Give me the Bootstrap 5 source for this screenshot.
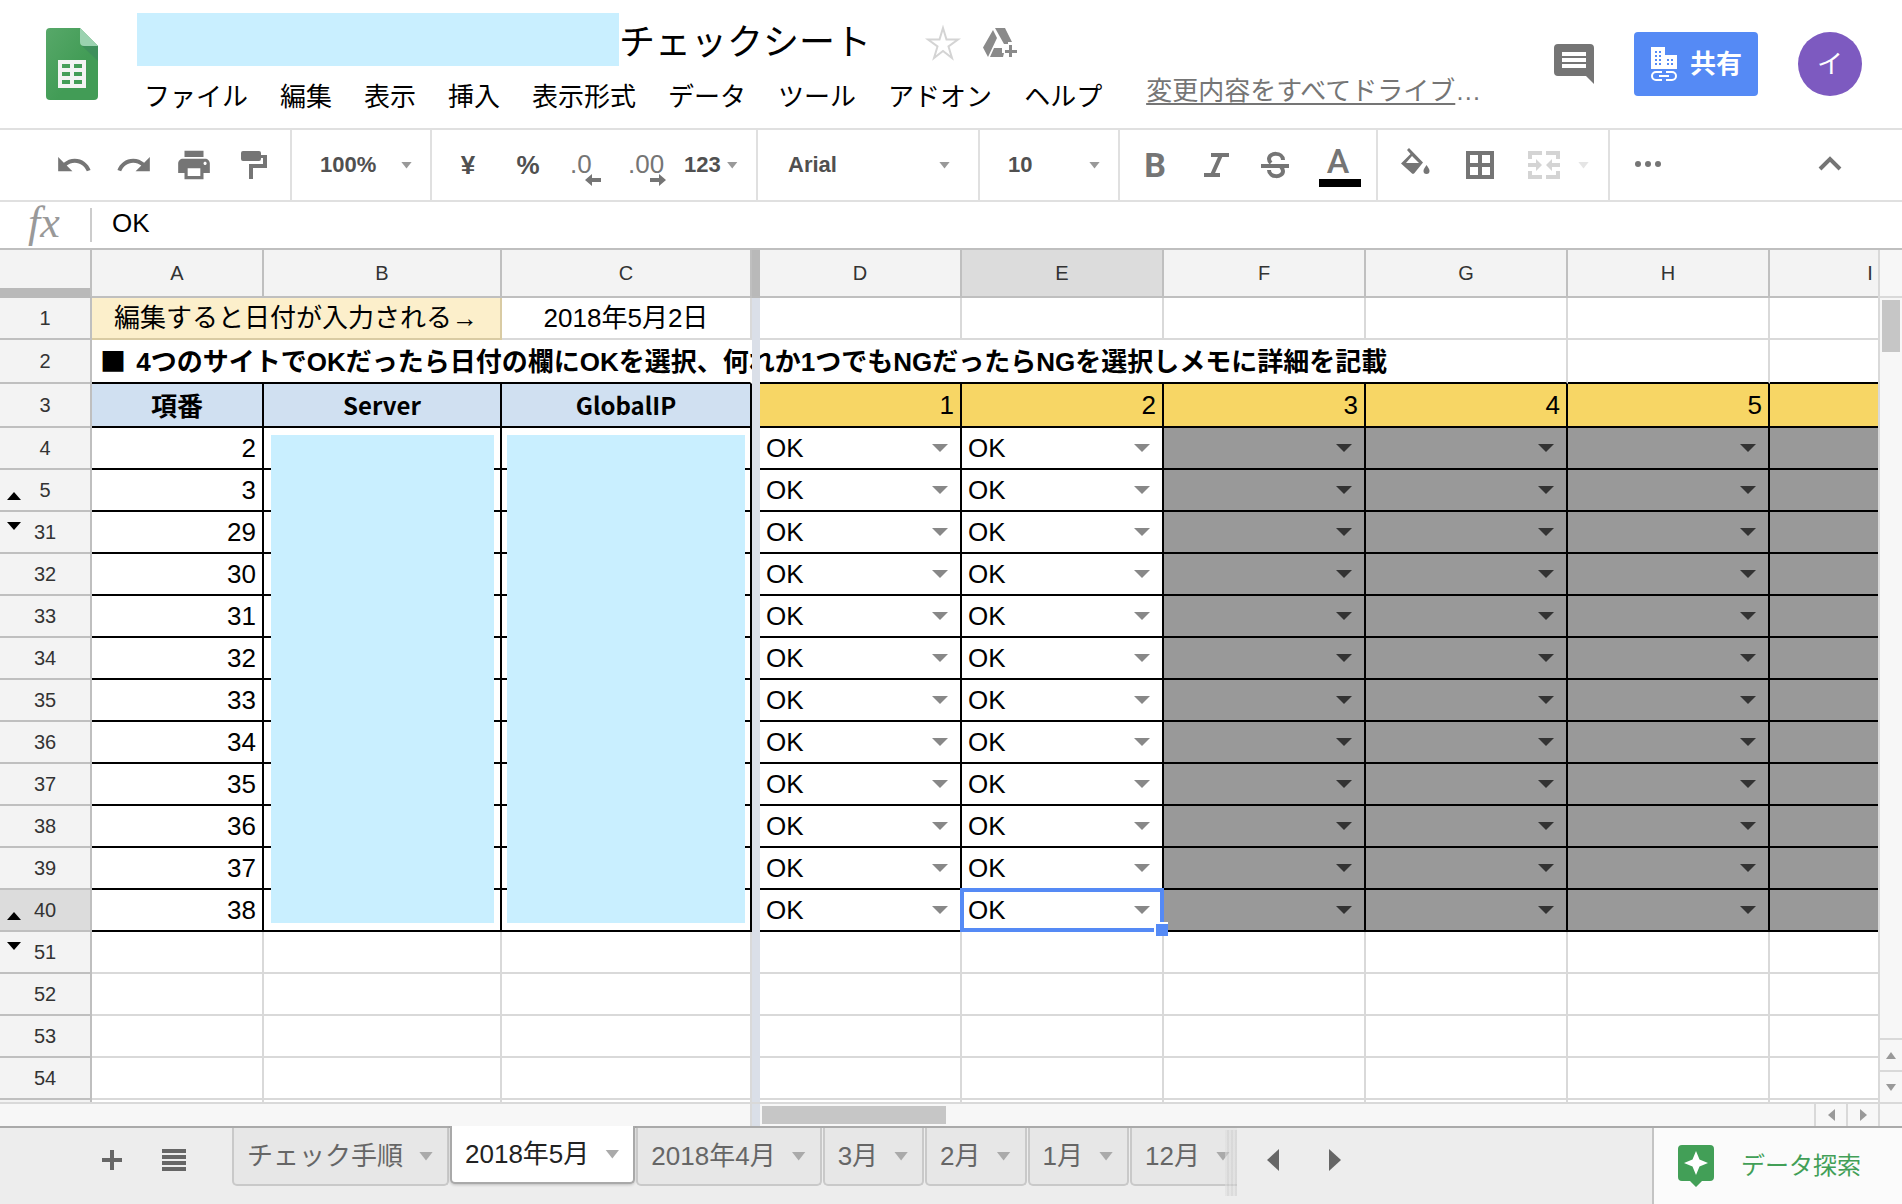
<!DOCTYPE html>
<html lang="ja">
<head>
<meta charset="utf-8">
<meta name="viewport" content="width=device-width, initial-scale=1">
<title>チェックシート</title>
<link rel="stylesheet" href="https://cdn.jsdelivr.net/npm/bootstrap@5.3.0/dist/css/bootstrap.min.css">
<style>
  :root { --line: #d9d9d9; --head-line: #bfbfbf; --icon: #757575; --hidden: #c9efff; --accent: #558af5; }
  body { font-family: "Liberation Sans", "Noto Sans CJK JP", sans-serif; font-size: 26px; line-height: 36px; color: #000; background: #fff; }
  button, input, select { font: inherit; color: inherit; }
  button, select { background: none; border: 0; padding: 0; appearance: none; }
  svg { display: block; flex: none; overflow: visible; }
  input:focus, select:focus { outline: 0; }

  /* title bar */
  .app-head { height: 130px; border-bottom: 2px solid #e0e0e0; }
  .logo-link { margin: 28px 39px 0 46px; }
  .doc-title { height: 53px; margin-top: 13px; font-size: 36px; }
  .doc-title > :not(.title-mask) { padding-top: 6px; }
  .title-mask { width: 482px; background: var(--hidden); }
  .menu-row { gap: 32px; padding: 13px 0 0 7px; }
  .menu-row button { white-space: nowrap; }
  .save-note { color: var(--icon); margin: 73px 0 0 44px; white-space: nowrap; }
  .save-note a { color: inherit; text-underline-offset: 3px; text-decoration-thickness: 2px; }
  .head-right { gap: 40px; padding: 32px 40px 0 0; }
  .share-btn { width: 124px; height: 64px; background: var(--accent); color: #fff; border-radius: 4px; font-weight: 700; gap: 12px; }
  .user-dot { width: 64px; height: 64px; background: #7d5ac0; color: #fff; }

  /* toolbar */
  .tool-row { height: 72px; border-bottom: 2px solid #e0e0e0; color: var(--icon); }
  .tool-group { border-right: 2px solid #e0e0e0; padding: 0 6px; }
  .group-edit { width: 292px; padding-left: 44px; }
  .group-small { width: 140px; padding: 0 18px 0 28px; }
  .group-font { width: 222px; padding: 0 28px 0 30px; }
  .group-style { width: 258px; padding-left: 7px; }
  .group-cell { width: 232px; padding-left: 8px; }
  .tool-btn { width: 60px; height: 60px; display: flex; align-items: center; justify-content: center; }
  .tool-group b, .tool-group select { color: #505050; font-weight: 700; }
  .tool-text { font-size: 22px; }
  .num-btn { width: 72px; padding-left: 6px; gap: 6px; }
  .tool-group select { min-width: 0; flex: 1; }
  .fold-bar { margin-right: 42px; }
  .tri { width: 11px; height: 7px; background: #999; clip-path: polygon(0 0, 100% 0, 50% 100%); flex: none; }
  .tool-group svg text { fill: currentColor; }

  /* formula bar */
  .formula-row { height: 48px; border-bottom: 2px solid var(--head-line); }
  .fx-mark { width: 92px; height: 34px; margin-top: 6px; border-right: 2px solid #ccc; color: #999; font: italic 44px/30px "Liberation Serif", serif; padding-left: 28px; }
  .formula-row input { border: 0; padding: 0 20px; height: 42px; }

  /* grid */
  .grid-area { min-height: 0; }
  .sheet { table-layout: fixed; width: 1972px; border-collapse: separate; border-spacing: 0; }
  .sheet th, .sheet td { height: 42px; padding: 0 6px; border: solid var(--line); border-width: 0 2px 2px 0; line-height: 36px; white-space: nowrap; }
  .sheet th { background: #f3f3f3; border-color: var(--head-line); font-size: 20px; font-weight: 400; color: #333; text-align: center; padding: 0; }
  .sheet thead th { height: 48px; }
  .sheet tr.tall > * { height: 44px; }
  .sheet th.on { background: #dcdcdc; }
  .sheet .corner { background: linear-gradient(#f3f3f3 38px, #b9b9b9 38px); border-bottom-color: #b9b9b9; }
  .sheet .split { position: relative; z-index: 1; padding: 0; border-right: 0; background: #dadfe8; border-color: #dadfe8; }
  .sheet th.split { background: #b9b9b9; border-color: #b9b9b9; }
  .sheet .notice { background: #fcefcb; border-color: #d9cba3; }
  .sheet .guide { border-bottom-color: #000; border-right-color: transparent; overflow: visible; font-weight: 700; padding-left: 8px; }
  .square { font-family: "Noto Sans CJK JP", sans-serif; margin-right: 3px; }
  .sheet .ruled { border-color: #000; }
  .sheet .rule-b { border-bottom-color: #000; }
  .sheet .label-cell { background: #d0e0f1; font-family: "Noto Sans CJK JP", sans-serif; font-weight: 700; }
  .sheet .label-latin { font-size: 24px; }
  .sheet .day { background: #f7d665; }
  .sheet .future { background: #999; }
  .pick { display: flex; align-items: center; padding-right: 6px; }
  .pick select { flex: 1; min-width: 0; height: 38px; }
  .pick .tri { width: 16px; height: 8px; background: #888; }
  .future .tri { background: #333; }
  .mask { position: absolute; inset: 7px 6px auto 7px; height: 488px; background: var(--hidden); z-index: 1; }
  .mask.wide { inset: 7px 5px auto 5px; }
  .cursor { position: absolute; inset: -2px; border: 4px solid var(--accent); pointer-events: none; z-index: 2; }
  .cursor::after { content: ""; position: absolute; right: -8px; bottom: -8px; width: 14px; height: 14px; background: var(--accent); border: solid #fff; border-width: 2px 0 0 2px; }
  .fold { position: absolute; left: 7px; width: 14px; height: 8px; background: #000; }
  .fold.up { bottom: 10px; clip-path: polygon(50% 0, 100% 100%, 0 100%); }
  .fold.down { top: 10px; clip-path: polygon(0 0, 100% 0, 50% 100%); }

  /* scroll bars */
  .v-bar { width: 24px; border-left: 2px solid var(--line); background: #f7f7f7; }
  .v-cap { height: 48px; border-bottom: 2px solid var(--line); }
  .v-thumb { height: 52px; margin: 2px; background: #c6c6c6; }
  .v-bar button { height: 32px; border-top: 2px solid var(--line); }
  .h-bar { height: 24px; border-top: 2px solid var(--line); background: #f7f7f7; }
  .h-fixed { width: 752px; border-right: 2px solid var(--line); }
  .h-split { width: 8px; background: #dadfe8; }
  .h-thumb { width: 184px; height: 18px; margin: 2px; background: #c6c6c6; }
  .h-bar button { width: 32px; border-left: 2px solid var(--line); }
  .h-end { width: 24px; border-left: 2px solid var(--line); }
  .v-bar svg, .h-bar svg { fill: #999; margin: auto; }

  /* sheet tabs */
  .foot { height: 78px; border-top: 2px solid #aaa; background: #ededed; }
  .foot-tools { width: 232px; padding: 4px 0 0 102px; gap: 40px; }
  .tab-strip { width: 1005px; overflow: hidden; margin-top: -2px; }
  .sheet-tab { display: flex; align-items: center; gap: 16px; height: 58px; margin-top: 2px; padding: 0 14px 0 13px; border: solid #c9c9c9; border-width: 0 2px 2px; border-radius: 0 0 5px 5px; background: #e7e7e7; color: #666; white-space: nowrap; flex: none; }
  .sheet-tab + .sheet-tab { margin-left: 1px; }
  .sheet-tab .tri { width: 14px; height: 9px; background: #aaa; }
  .sheet-tab.current { margin-top: 0; background: #fff; color: #222; border-color: #a9a9a9; box-shadow: 0 1px 3px #0003; }
  .tab-fade { position: absolute; right: 0; top: 2px; width: 12px; height: 66px; background: repeating-linear-gradient(90deg, #ddd8 0 2px, #ccc8 2px 4px); }
  .tab-nav { gap: 50px; padding-left: 30px; padding-bottom: 12px; }
  .explore { width: 250px; border-left: 2px solid #c4c4c4; background: #fbfbfb; color: #429f57; font-size: 24px; padding-left: 24px; gap: 27px; }
</style>
</head>
<body class="vh-100 d-flex flex-column overflow-hidden">

<header class="app-head d-flex flex-shrink-0">
  <a class="logo-link" href="#" aria-label="ホーム">
    <svg width="52" height="72" viewBox="0 0 52 72">
      <defs><linearGradient id="lg" x1="0" y1="0" x2="1" y2="1"><stop offset="0" stop-color="#57a869"/><stop offset=".6" stop-color="#429c56"/></linearGradient></defs>
      <path fill="url(#lg)" d="M4 0h30l18 18v50a4 4 0 0 1-4 4H4a4 4 0 0 1-4-4V4a4 4 0 0 1 4-4z"/>
      <path fill="#3d8a5e" opacity=".7" d="M35 17l17 16V18z"/>
      <path fill="#9bd2b0" d="M34 0l18 18H38a4 4 0 0 1-4-4z"/>
      <path fill="#f3f3f3" fill-rule="evenodd" d="M12 32h28v28H12zM16 36v4h8v-4zM28 36v4h8v-4zM16 44v4h8v-4zM28 44v4h8v-4zM16 52v4h8v-4zM28 52v4h8v-4z"/>
    </svg>
  </a>
  <div>
    <div class="doc-title d-flex align-items-center">
      <div class="title-mask h-100"></div>
      <span>チェックシート</span>
      <button class="ms-5 ps-2" aria-label="スターを付ける"><svg width="32" height="34" viewBox="0 0 32 34"><path fill="none" stroke="#d4d4d4" stroke-width="2" d="M16 2l3.500 11.500H31l-9.500 7L25 32l-9-7-9 7 3.500-11.500-9.500-7h11.500z"/></svg></button>
      <button class="ms-4" aria-label="ドライブに追加"><svg width="34" height="30" viewBox="0 0 34 30" fill="#8a8a8a"><path d="M10 2l4 8L5 29 0 19.500zM12 0h10l7 14h-4v2h-4zM11 20h8v5h2l-1 4H7z"/><path d="M26 17h3v5h5v3h-5v4h-3v-4h-4v-3h4z"/></svg></button>
    </div>
    <nav class="menu-row d-flex">
      <button>ファイル</button><button>編集</button><button>表示</button><button>挿入</button><button>表示形式</button><button>データ</button><button>ツール</button><button>アドオン</button><button>ヘルプ</button>
    </nav>
  </div>
  <div class="save-note"><a href="#">変更内容をすべてドライブ</a>…</div>
  <div class="head-right d-flex ms-auto align-items-start">
    <button class="mt-2 pt-1" aria-label="コメント"><svg width="40" height="40" viewBox="0 0 40 40"><path fill="#757575" fill-rule="evenodd" d="M4 0h32a4 4 0 0 1 4 4v36l-8-8H4a4 4 0 0 1-4-4V4a4 4 0 0 1 4-4zM8 8v4h24V8zM8 14v4h24v-4zM8 20v4h24v-4z"/></svg></button>
    <button class="share-btn d-flex align-items-center justify-content-center">
      <svg width="28" height="34" viewBox="0 0 28 34"><path fill="#fff" fill-rule="evenodd" d="M1 0h14v8h12v14H1zM5 4v2h2V4zM9 4v2h2V4zM5 8v2h2V8zM9 8v2h2V8zM5 12v2h2v-2zM9 12v2h2v-2zM5 16v2h2v-2zM9 16v2h2v-2zM17 12v2h2v-2zM21 12v2h2v-2zM17 16v2h2v-2zM21 16v2h2v-2z"/><path fill="none" stroke="#fff" stroke-width="2" d="M12 25H6a4 4 0 0 0 0 8h6M16 25h6a4 4 0 0 1 0 8h-6M9 29h10"/></svg>
      共有</button>
    <button class="user-dot rounded-circle">イ</button>
  </div>
</header>

<div class="tool-row d-flex flex-shrink-0" role="toolbar">
  <div class="tool-group group-edit d-flex align-items-center">
    <button class="tool-btn" aria-label="元に戻す"><svg width="38" height="38" viewBox="0 0 24 24" fill="currentColor"><path d="M12.500 8c-2.650 0-5.050.99-6.900 2.600L2 7v9h9l-3.620-3.620c1.390-1.160 3.160-1.880 5.120-1.880 3.540 0 6.550 2.310 7.600 5.500l2.370-.78C21.080 11.030 17.150 8 12.500 8z"/></svg></button>
    <button class="tool-btn" aria-label="やり直し"><svg width="38" height="38" viewBox="0 0 24 24" fill="currentColor"><path d="M18.400 10.600C16.550 8.990 14.150 8 11.500 8c-4.650 0-8.580 3.030-9.960 7.220L3.900 16c1.050-3.190 4.050-5.500 7.600-5.500 1.950 0 3.730.72 5.120 1.880L13 16h9V7l-3.600 3.600z"/></svg></button>
    <button class="tool-btn" aria-label="印刷"><svg width="38" height="38" viewBox="0 0 24 24" fill="currentColor"><path d="M19 8H5c-1.660 0-3 1.340-3 3v6h4v4h12v-4h4v-6c0-1.660-1.340-3-3-3zm-3 11H8v-5h8v5zm3-7c-.55 0-1-.45-1-1s.45-1 1-1 1 .45 1 1-.45 1-1 1zm-1-9H6v4h12V3z"/></svg></button>
    <button class="tool-btn" aria-label="書式を貼り付け"><svg width="26" height="28" viewBox="0 0 26 28" fill="currentColor"><path d="M2 0h16a2 2 0 0 1 2 2v2h6v13H12v11H8V13h14V7h-2v1a2 2 0 0 1-2 2H2a2 2 0 0 1-2-2V2a2 2 0 0 1 2-2z"/></svg></button>
  </div>
  <div class="tool-group group-small d-flex align-items-center tool-text">
    <select aria-label="ズーム"><option>100%</option></select><span class="tri"></span>
  </div>
  <div class="tool-group d-flex align-items-center">
    <button class="tool-btn"><b>¥</b></button>
    <button class="tool-btn"><b>%</b></button>
    <button class="tool-btn" aria-label="小数点以下の桁数を減らす"><svg width="42" height="36" viewBox="0 0 42 36" fill="currentColor"><text x="3" y="26" font-size="26">.0</text><path d="M18 33l7-6v4h9v4h-9v4z"/></svg></button>
    <button class="tool-btn" aria-label="小数点以下の桁数を増やす"><svg width="42" height="36" viewBox="0 0 42 36" fill="currentColor"><text x="1" y="26" font-size="26">.00</text><path d="M39 33l-7-6v4h-9v4h9v4z"/></svg></button>
    <button class="tool-text num-btn d-flex align-items-center"><b>123</b><span class="tri"></span></button>
  </div>
  <div class="tool-group group-font d-flex align-items-center tool-text">
    <select aria-label="フォント"><option>Arial</option></select><span class="tri"></span>
  </div>
  <div class="tool-group group-small d-flex align-items-center tool-text">
    <select aria-label="フォント サイズ"><option>10</option></select><span class="tri"></span>
  </div>
  <div class="tool-group group-style d-flex align-items-center">
    <button class="tool-btn" aria-label="太字"><svg width="42" height="42" viewBox="0 0 42 42"><text x="19" y="33" text-anchor="middle" font-family="Roboto" font-weight="700" font-size="34">B</text></svg></button>
    <button class="tool-btn" aria-label="斜体"><svg width="42" height="42" viewBox="0 0 42 42"><path fill="none" stroke="currentColor" stroke-width="4" d="M15 11h18M8 31h16M25 11l-9 20"/></svg></button>
    <button class="tool-btn" aria-label="取り消し線"><svg width="42" height="42" viewBox="0 0 42 42" fill="none" stroke="currentColor" stroke-width="4"><path d="M28 16c0-8-14-8-14-1 0 2 1 3 2 4M14 26c0 8 14 8 14 1 0-2-1-3-2-4M6 22h28"/></svg></button>
    <button class="tool-btn ms-1" aria-label="テキストの色"><svg width="42" height="42" viewBox="0 0 42 42"><text x="19" y="29" text-anchor="middle" font-family="Roboto" font-weight="500" font-size="34">A</text><path fill="#000" d="M0 35h42v8H0z"/></svg></button>
  </div>
  <div class="tool-group group-cell d-flex align-items-center">
    <button class="tool-btn pb-2" aria-label="塗りつぶし"><svg width="30" height="27" viewBox="0 0 30 27" fill="currentColor"><path fill-rule="evenodd" d="M6 2l2-2 14 14.500-8.500 10.500a2 2 0 0 1-3 0L0 15.500 9.500 6zM11 8L5 15h13z"/><path d="M25.500 17c2 3 3 4.500 3 6a3 3 0 0 1-6 0c0-1.500 1-3 3-6z"/></svg></button>
    <button class="tool-btn ms-1" aria-label="枠線"><svg width="28" height="28" viewBox="0 0 28 28"><path fill="none" stroke="currentColor" stroke-width="4" d="M2 2h24v24H2zM14 2v24M2 14h24"/></svg></button>
    <button class="tool-btn ms-1" aria-label="セルを結合"><svg width="32" height="28" viewBox="0 0 32 28" fill="#d4d4d4"><path d="M0 0h14v4H4v4H0zM18 0h14v8h-4V4H18zM0 20h4v4h10v4H0zM28 20h4v8H18v-4h10zM0 12h8V8l6 6-6 6v-4H0zM32 12h-8V8l-6 6 6 6v-4h8z"/></svg></button>
    <span class="tri ms-1 opacity-25"></span>
  </div>
  <button class="tool-btn mt-1 ms-2" aria-label="その他"><svg width="26" height="8" viewBox="0 0 26 8" fill="currentColor"><circle cx="3" cy="4" r="3"/><circle cx="13" cy="4" r="3"/><circle cx="23" cy="4" r="3"/></svg></button>
  <button class="tool-btn fold-bar ms-auto mt-1" aria-label="メニューを非表示"><svg width="24" height="16" viewBox="0 0 24 16"><path fill="none" stroke="currentColor" stroke-width="4" d="M2 13L12 3l10 10"/></svg></button>
</div>

<div class="formula-row d-flex flex-shrink-0">
  <label class="fx-mark" for="fx">fx</label>
  <input id="fx" class="flex-grow-1" value="OK">
</div>

<main class="grid-area d-flex flex-grow-1 overflow-hidden">
  <div class="flex-grow-1 overflow-hidden">
    <table class="sheet">
      <colgroup><col width="92"><col width="172"><col width="238"><col width="250"><col width="8"><col width="202"><col width="202"><col width="202"><col width="202"><col width="202"><col width="202"></colgroup>
      <thead><tr><th class="corner"></th><th>A</th><th>B</th><th>C</th><th class="split"></th><th>D</th><th class="on">E</th><th>F</th><th>G</th><th>H</th><th>I</th></tr></thead>
      <tbody id="rows">
        <tr><th>1</th><td class="notice text-center" colspan="2">編集すると日付が入力される→</td><td class="text-center">2018年5月2日</td><td class="split"></td><td></td><td></td><td></td><td></td><td></td><td></td></tr>
        <tr class="tall"><th>2</th><td class="guide" colspan="3"><span class="square">■</span> 4つのサイトでOKだったら日付の欄にOKを選択、何れか1つでもNGだったらNGを選択しメモに詳細を記載</td><td class="split"></td><td class="rule-b" colspan="4"></td><td class="rule-b"></td><td class="rule-b"></td></tr>
        <tr class="tall"><th>3</th><td class="ruled label-cell text-center">項番</td><td class="ruled label-cell label-latin text-center">Server</td><td class="ruled label-cell label-latin text-center">GlobalIP</td><td class="split"></td><td class="ruled day text-end">1</td><td class="ruled day text-end">2</td><td class="ruled day text-end">3</td><td class="ruled day text-end">4</td><td class="ruled day text-end">5</td><td class="ruled day"></td></tr>
      </tbody>
    </table>
  </div>
  <div class="v-bar d-flex flex-column flex-shrink-0">
    <div class="v-cap"></div>
    <div class="v-thumb"></div>
    <button class="mt-auto" aria-label="上へ"><svg width="10" height="7"><path d="M5 0l5 7H0z"/></svg></button>
    <button aria-label="下へ"><svg width="10" height="7"><path d="M0 0h10L5 7z"/></svg></button>
  </div>
</main>

<div class="h-bar d-flex flex-shrink-0">
  <div class="h-fixed"></div><div class="h-split"></div>
  <div class="h-thumb"></div>
  <button class="ms-auto" aria-label="左へ"><svg width="7" height="12"><path d="M7 0v12L0 6z"/></svg></button>
  <button aria-label="右へ"><svg width="7" height="12"><path d="M0 0v12l7-6z"/></svg></button>
  <div class="h-end"></div>
</div>

<footer class="foot d-flex flex-shrink-0">
  <div class="foot-tools d-flex align-items-center pb-3">
    <button aria-label="シートを追加"><svg width="20" height="20"><path fill="#666" d="M8 0h4v8h8v4h-8v8H8v-8H0V8h8z"/></svg></button>
    <button aria-label="すべてのシート"><svg width="24" height="24"><path fill="#666" d="M0 1h24v4H0zM0 7h24v4H0zM0 13h24v4H0zM0 19h24v4H0z"/></svg></button>
  </div>
  <div class="position-relative">
    <div class="tab-strip d-flex align-items-start pb-2">
      <button class="sheet-tab">チェック手順<span class="tri"></span></button>
      <button class="sheet-tab current">2018年5月<span class="tri"></span></button>
      <button class="sheet-tab">2018年4月<span class="tri"></span></button>
      <button class="sheet-tab">3月<span class="tri"></span></button>
      <button class="sheet-tab">2月<span class="tri"></span></button>
      <button class="sheet-tab">1月<span class="tri"></span></button>
      <button class="sheet-tab">12月<span class="tri"></span></button>
    </div>
    <div class="tab-fade"></div>
  </div>
  <div class="tab-nav d-flex align-items-center">
    <button aria-label="前のシート"><svg width="12" height="22"><path fill="#666" d="M12 0v22L0 11z"/></svg></button>
    <button aria-label="次のシート"><svg width="12" height="22"><path fill="#666" d="M0 0v22l12-11z"/></svg></button>
  </div>
  <button class="explore d-flex align-items-center ms-auto">
    <svg width="36" height="42" viewBox="0 0 36 42"><path fill="#429f57" d="M4 0h28a4 4 0 0 1 4 4v28a4 4 0 0 1-4 4h-8l-6 6-6-6H4a4 4 0 0 1-4-4V4a4 4 0 0 1 4-4z"/><path fill="#fff" d="M18 6l3.500 8.500L30 18l-8.500 3.500L18 30l-3.500-8.500L6 18l8.500-3.500z"/></svg>
    <span>データ探索</span></button>
</footer>

<script>
  // [row number, item number, fold marker]
  const data = [[4, 2], [5, 3, 'up'], [31, 29, 'down'], [32, 30], [33, 31], [34, 32], [35, 33], [36, 34], [37, 35], [38, 36], [39, 37], [40, 38, 'up']];
  const pick = (col, row, value) => `<div class="pick"><select aria-label="${col}${row}"><option>${value}</option></select><span class="tri"></span></div>`;
  const fold = f => f ? `<span class="fold ${f}"></span>` : '';
  let html = '';
  data.forEach(([row, item, mark], i) => {
    const mask = c => i === 0 ? `<div class="mask ${c}"></div>` : '';
    html += `<tr><th class="position-relative ${row === 40 ? 'on' : ''}">${fold(mark)}${row}</th>
      <td class="ruled text-end">${item}</td><td class="ruled position-relative">${mask('')}</td><td class="ruled position-relative">${mask('wide')}</td><td class="split"></td>`;
    html += `<td class="ruled">${pick('D', row, 'OK')}</td>`;
    html += `<td class="ruled position-relative">${pick('E', row, 'OK')}${row === 40 ? '<div class="cursor"></div>' : ''}</td>`;
    for (const c of 'FGHI') html += `<td class="ruled future">${pick(c, row, '')}</td>`;
    html += '</tr>';
  });
  [51, 52, 53, 54, 55].forEach(row => {
    html += `<tr><th class="position-relative">${row === 51 ? fold('down') : ''}${row < 55 ? row : ''}</th><td></td><td></td><td></td><td class="split"></td>${'<td></td>'.repeat(6)}</tr>`;
  });
  document.getElementById('rows').insertAdjacentHTML('beforeend', html);
</script>
<script src="https://cdn.jsdelivr.net/npm/bootstrap@5.3.0/dist/js/bootstrap.bundle.min.js"></script>
</body>
</html>
